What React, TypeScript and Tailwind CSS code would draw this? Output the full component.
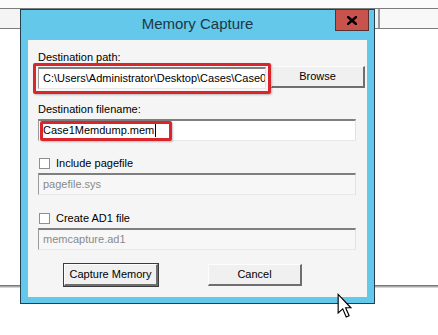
import * as React from "react";

function TextBox({
  value,
  disabled = false,
  caret = false,
  className = "",
}: {
  value: string;
  disabled?: boolean;
  caret?: boolean;
  className?: string;
}) {
  return (
    <div
      className={`flex h-[22px] items-center pl-[4px] border-t-2 border-l border-t-[#7f7f7f] border-l-[#9a9a9a] border-r border-b border-r-[#e2e2e2] border-b-[#e8e8e8] text-[11px] leading-[13px] whitespace-nowrap overflow-hidden ${
        disabled ? "bg-[#f7f7f7] text-[#8a8a8a]" : "bg-white text-black"
      } ${className}`}
    >
      <span>{value}</span>
      {caret && <span className="ml-[1px] h-[13px] w-px bg-black" />}
    </div>
  );
}

function Checkbox({ label }: { label: string }) {
  return (
    <div className="flex h-[12px] items-center gap-[6px] pl-[1px]">
      <div className="h-[11px] w-[11px] border border-[#8e8f8f] bg-white" />
      <span className="text-[11px] leading-[13px] text-black">{label}</span>
    </div>
  );
}

function Button({ label, primary = false }: { label: string; primary?: boolean }) {
  return (
    <div
      className={`flex h-[22px] w-[94px] items-center justify-center text-[11px] text-black bg-[#f0f0f0] border-t border-l border-t-[#fdfdfd] border-l-[#fdfdfd] border-r-2 border-b-2 border-r-[#6e6e6e] border-b-[#6e6e6e] ${
        primary ? "outline outline-1 outline-[#3c3c3c]" : ""
      }`}
    >
      {label}
    </div>
  );
}

export default function App() {
  return (
    <div className="relative h-[335px] w-[438px] overflow-hidden bg-white font-['Liberation_Sans',Arial,sans-serif]">
      {/* background application behind the dialog */}
      <div className="h-[8px] bg-[#fbfbfb]" />
      <div className="flex h-[21px] justify-end border-y border-y-[#7c7c7c] bg-[#f4f4f4]">
        <div className="w-[60px] border-l-2 border-l-[#9a9a9a] bg-[#f8f8f8]" />
      </div>
      <div className="mt-[256px] h-[3px] border-t border-t-[#7a7a7a] bg-[#a8a8a8] border-b border-b-[#d6d6d6]" />

      {/* dialog window */}
      <div className="absolute left-[20px] top-[9px] flex h-[295px] w-[355px] flex-col border border-[#24404f] bg-[#63c8ea]">
        <div className="relative flex h-[30px] items-center justify-center">
          <span className="mt-[-1px] text-[15px] text-[#1d3745]">Memory Capture</span>
          <div className="absolute right-[5px] top-[-1px] flex h-[22px] w-[34px] items-center justify-center border border-[#5b3030] bg-[#c8524c]">
            <svg width="10" height="9" viewBox="0 0 10 9">
              <path d="M1 1 L9 8 M9 1 L1 8" stroke="#000" strokeWidth="2.4" strokeLinecap="square" />
            </svg>
          </div>
        </div>

        <div className="mx-[7px] flex h-[257px] flex-col bg-[#f5f5f5] pl-[10px] pt-[11px]">
          <div className="h-[13px] text-[11px] leading-[13px] text-black">Destination path:</div>
          <div className="mt-[2px] flex items-start gap-[5px]">
            <TextBox value="C:\Users\Administrator\Desktop\Cases\Case0" className="mt-[1px] w-[228px]" />
            <Button label="Browse" />
          </div>

          <div className="mt-[14px] h-[13px] text-[11px] leading-[13px] text-black">Destination filename:</div>
          <TextBox value="Case1Memdump.mem" caret className="mt-[3px] w-[318px]" />

          <div className="mt-[16px]">
            <Checkbox label="Include pagefile" />
          </div>
          <TextBox value="pagefile.sys" disabled className="mt-[4px] w-[318px]" />

          <div className="mt-[17px]">
            <Checkbox label="Create AD1 file" />
          </div>
          <TextBox value="memcapture.ad1" disabled className="mt-[4px] w-[318px]" />

          <div className="mt-[14px] flex gap-[50px] pl-[26px]">
            <Button label="Capture Memory" primary />
            <Button label="Cancel" />
          </div>
        </div>
      </div>

      {/* red highlight annotations */}
      <div className="absolute left-[33px] top-[63px] h-[31px] w-[238px] rounded-[2px] border-[3px] border-[#d8262c] shadow-[1px_1px_2px_rgba(0,0,0,0.25)]" />
      <div className="absolute left-[40px] top-[121px] h-[20px] w-[132px] rounded-[2px] border-[3px] border-[#d8262c] shadow-[1px_1px_2px_rgba(0,0,0,0.25)]" />

      {/* mouse pointer */}
      <svg className="absolute left-[337px] top-[293px]" width="15" height="26" viewBox="0 0 13 22">
        <path
          d="M1 1 L1 17 L5 13.5 L8 20.5 L10.5 19.5 L7.5 12.5 L12 12.5 Z"
          fill="#fff"
          stroke="#000"
          strokeWidth="1"
          strokeLinejoin="miter"
        />
      </svg>
    </div>
  );
}
